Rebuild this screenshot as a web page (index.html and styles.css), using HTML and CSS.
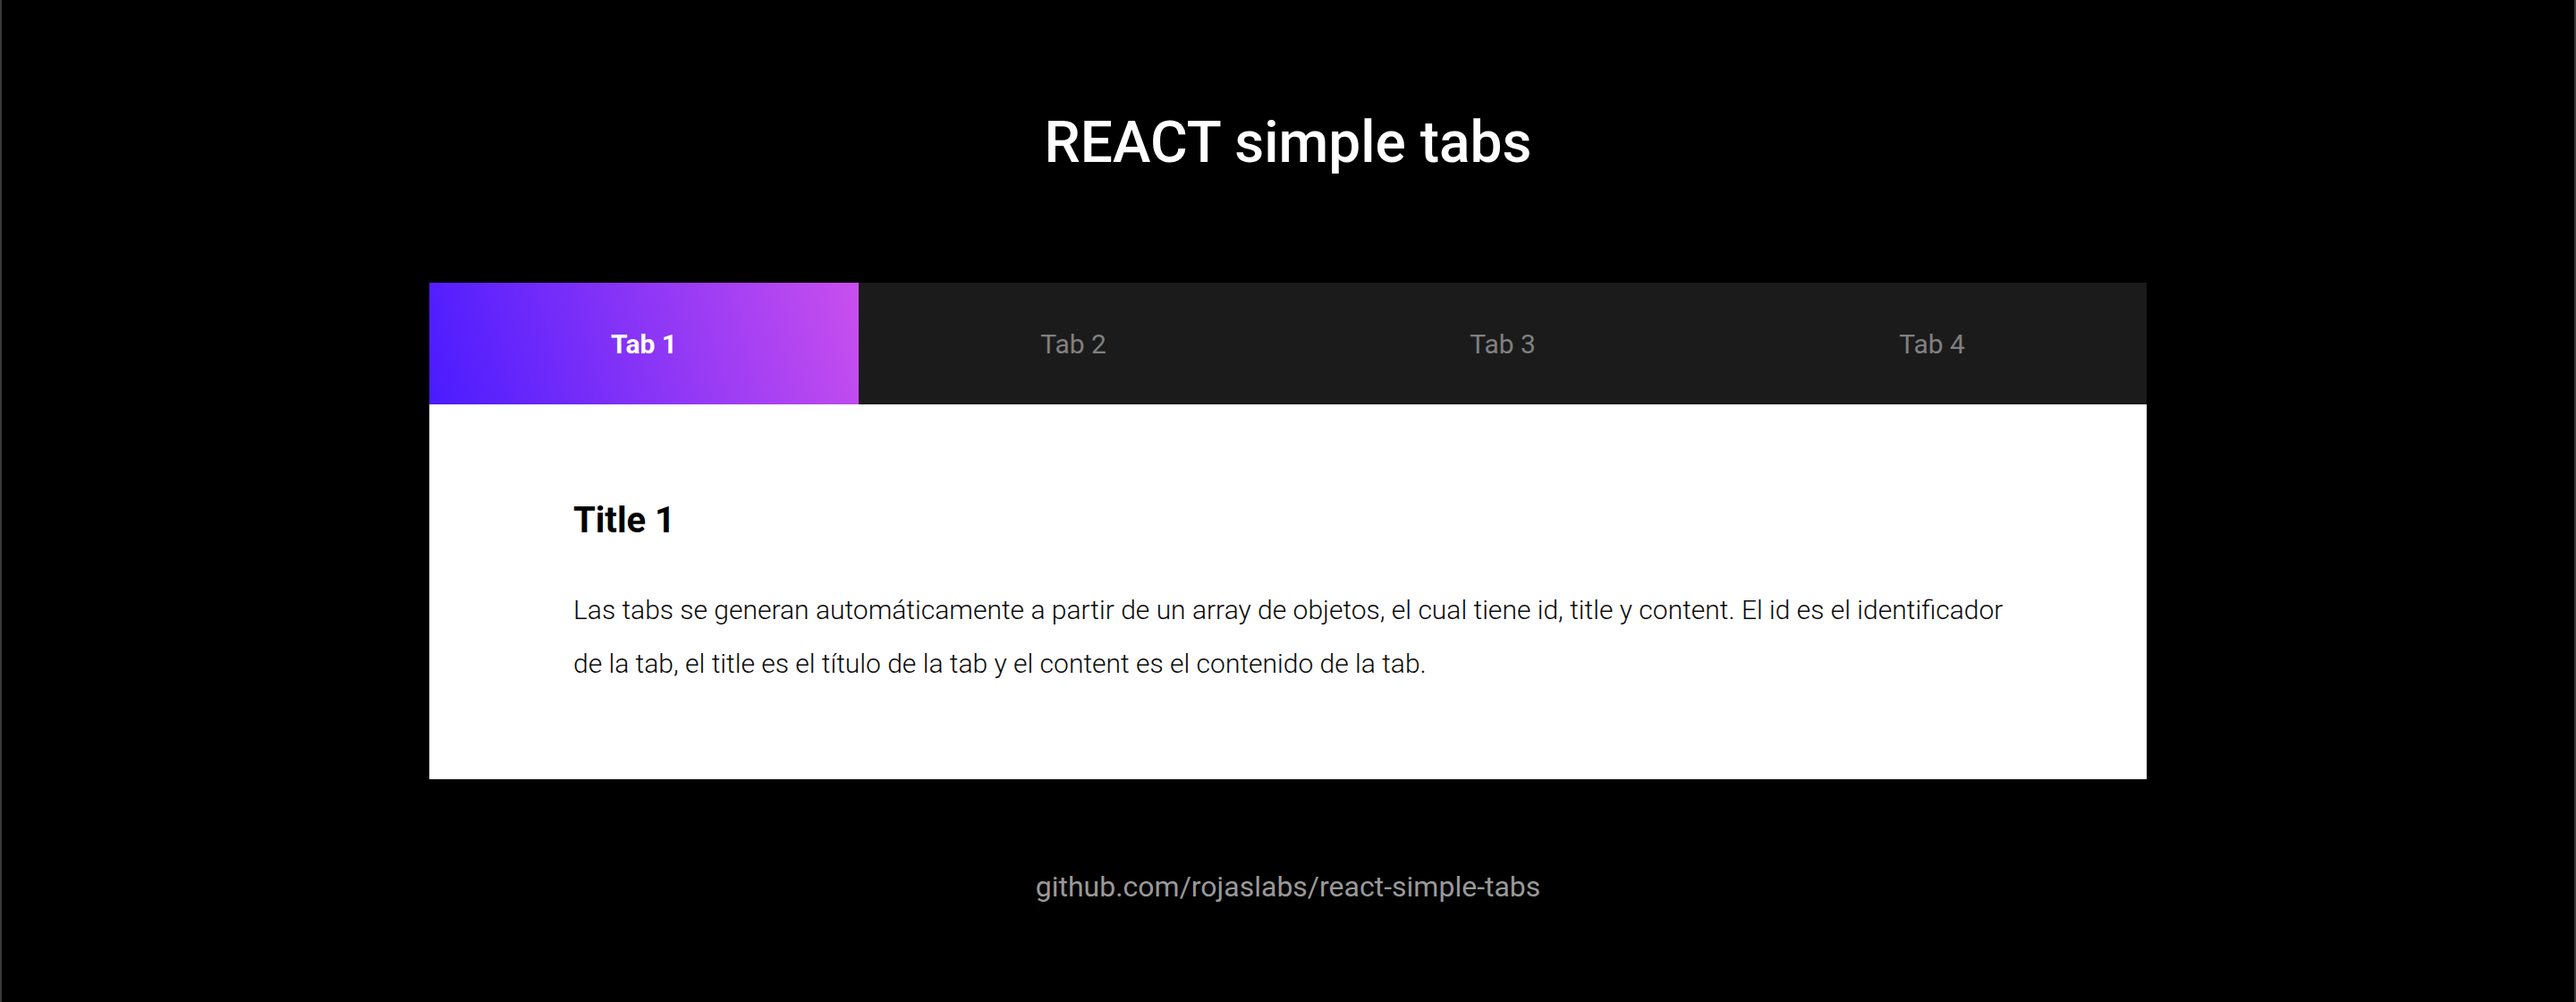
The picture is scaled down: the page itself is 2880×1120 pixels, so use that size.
FILE: index.html
```html
<!DOCTYPE html>
<html lang="es">
<head>
<meta charset="utf-8">
<title>REACT simple tabs</title>
<link rel="stylesheet" href="styles.css">
</head>
<body>
<div class="page">
  <h1 class="heading">REACT simple tabs</h1>
  <section class="tabs">
    <nav class="tab-bar">
      <button class="tab active">Tab 1</button>
      <button class="tab">Tab 2</button>
      <button class="tab">Tab 3</button>
      <button class="tab">Tab 4</button>
    </nav>
    <div class="panel">
      <h2 class="panel-title">Title 1</h2>
      <p class="panel-text">Las tabs se generan automáticamente a partir de un array de objetos, el cual tiene id, title y content. El id es el identificador de la tab, el title es el título de la tab y el content es el contenido de la tab.</p>
    </div>
  </section>
  <footer class="footer">github.com/rojaslabs/react-simple-tabs</footer>
</div>
</body>
</html>
```
FILE: styles.css
```css
* { box-sizing: border-box; }
html, body { margin: 0; padding: 0; background: #000; }
body { font-family: Roboto, "Liberation Sans", sans-serif; }
.page {
  height: 1120px;
  border-left: 2px solid #3a3a3a;
  border-right: 2px solid #3a3a3a;
  display: flex;
  flex-direction: column;
  align-items: center;
  overflow: hidden;
}
.heading {
  margin: 0;
  padding-top: 128px;
  font-size: 64px;
  line-height: 64px;
  font-weight: 500;
  color: #fff;
}
.tabs {
  width: 1920px;
  margin-top: 124px;
}
.tab-bar {
  display: grid;
  grid-template-columns: repeat(4, 1fr);
  height: 136px;
  background: #1b1b1b;
}
.tab {
  border: 0;
  margin: 0;
  padding: 0;
  background: transparent;
  font-family: Roboto, "Liberation Sans", sans-serif;
  font-size: 30px;
  font-weight: 400;
  color: #808080;
  cursor: pointer;
}
.tab.active {
  background: linear-gradient(75deg, #4a1bff 0%, #c94fee 100%);
  color: #fff;
  font-weight: 700;
}
.panel {
  background: #fff;
  padding: 110px 160px 99px 161px;
}
.panel-title {
  margin: 0;
  font-size: 40px;
  line-height: 40px;
  font-weight: 700;
  color: #000;
}
.panel-text {
  margin: 50px 0 0;
  font-size: 30px;
  line-height: 60px;
  font-weight: 300;
  color: #0a0a0a;
}
.footer {
  margin-top: 101px;
  font-size: 32px;
  color: #999;
}
```
